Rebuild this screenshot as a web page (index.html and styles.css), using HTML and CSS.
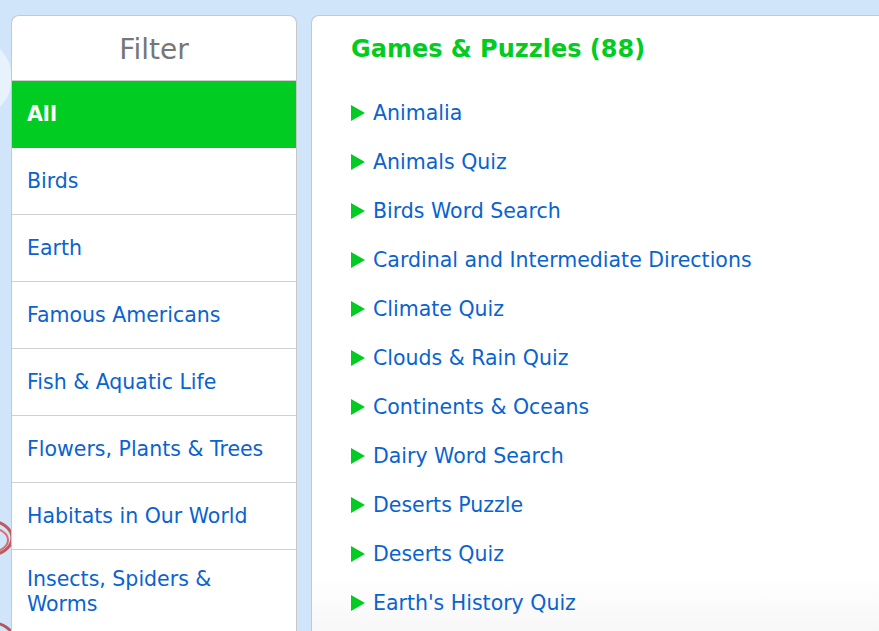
FILE: index.html
```html
<!DOCTYPE html>
<html lang="en">
<head>
<meta charset="utf-8">
<title>Games &amp; Puzzles</title>
<link rel="stylesheet" href="styles.css">
</head>
<body>
<div class="backdrop">
  <svg class="deco" width="60" height="631" viewBox="0 0 60 631" aria-hidden="true">
    <ellipse cx="-22" cy="78" rx="34" ry="38" fill="#e8f2fd"/>
    <ellipse cx="-14" cy="538" rx="26" ry="18" fill="none" stroke="#c0585c" stroke-width="3"/>
    <ellipse cx="-10" cy="540" rx="18" ry="12" fill="none" stroke="#d96a6e" stroke-width="2"/>
    <ellipse cx="-12" cy="640" rx="26" ry="18" fill="none" stroke="#b2585c" stroke-width="3"/>
  </svg>
</div>
<div class="page">
  <aside class="filter">
    <h2 class="filter-title">Filter</h2>
    <ul class="filter-list">
      <li class="filter-item active">All</li>
      <li class="filter-item">Birds</li>
      <li class="filter-item">Earth</li>
      <li class="filter-item">Famous Americans</li>
      <li class="filter-item">Fish &amp; Aquatic Life</li>
      <li class="filter-item">Flowers, Plants &amp; Trees</li>
      <li class="filter-item">Habitats in Our World</li>
      <li class="filter-item wrap">Insects, Spiders &amp; Worms</li>
    </ul>
  </aside>
  <main class="content">
    <h1 class="content-title">Games &amp; Puzzles (88)</h1>
    <ul class="games">
      <li class="game"><span class="tri"></span><a href="#">Animalia</a></li>
      <li class="game"><span class="tri"></span><a href="#">Animals Quiz</a></li>
      <li class="game"><span class="tri"></span><a href="#">Birds Word Search</a></li>
      <li class="game"><span class="tri"></span><a href="#">Cardinal and Intermediate Directions</a></li>
      <li class="game"><span class="tri"></span><a href="#">Climate Quiz</a></li>
      <li class="game"><span class="tri"></span><a href="#">Clouds &amp; Rain Quiz</a></li>
      <li class="game"><span class="tri"></span><a href="#">Continents &amp; Oceans</a></li>
      <li class="game"><span class="tri"></span><a href="#">Dairy Word Search</a></li>
      <li class="game"><span class="tri"></span><a href="#">Deserts Puzzle</a></li>
      <li class="game"><span class="tri"></span><a href="#">Deserts Quiz</a></li>
      <li class="game"><span class="tri"></span><a href="#">Earth's History Quiz</a></li>
    </ul>
  </main>
</div>
</body>
</html>
```
FILE: styles.css
```css
html, body {
  margin: 0;
  padding: 0;
  height: 631px;
  overflow: hidden;
}
body {
  background: #d0e5fa;
  font-family: "Comic Sans MS", "DejaVu Sans", sans-serif;
  position: relative;
}
.backdrop {
  position: absolute;
  left: 0;
  top: 0;
}
.deco {
  display: block;
}
.page {
  position: relative;
  display: flex;
  align-items: flex-start;
  gap: 14px;
  padding: 15px 0 0 11px;
  width: 879px;
  height: 631px;
  box-sizing: border-box;
}
.filter {
  width: 286px;
  box-sizing: border-box;
  flex: none;
  background: #fff;
  border: 1px solid #c8c8c8;
  border-bottom: none;
  border-radius: 8px 8px 0 0;
  height: 616px;
  overflow: hidden;
}
.filter-title {
  margin: 0;
  height: 64px;
  line-height: 68px;
  text-align: center;
  font-size: 28px;
  font-weight: normal;
  color: #777;
  border-bottom: 1px solid #d0d0d0;
}
.filter-list {
  list-style: none;
  margin: 0;
  padding: 0;
}
.filter-item {
  height: 67px;
  box-sizing: border-box;
  display: flex;
  align-items: center;
  padding: 0 20px 0 15px;
  font-size: 20.5px;
  line-height: 25px;
  color: #0a63cf;
  border-bottom: 1px solid #d0d0d0;
}
.filter-item.active {
  background: #00cc22;
  color: #fff;
  font-weight: bold;
  border-bottom: none;
}
.filter-item.wrap {
  height: auto;
  align-items: flex-start;
  padding: 17px 50px 17px 15px;
}
.content {
  flex: 1;
  height: 616px;
  box-sizing: border-box;
  background: linear-gradient(to bottom, #fff 0, #fff 560px, #f7f7f7 616px);
  border: 1px solid #c8c8c8;
  border-right: none;
  border-bottom: none;
  border-radius: 8px 0 0 0;
  padding: 17px 0 0 39px;
}
.content-title {
  margin: 0;
  font-size: 24px;
  line-height: 32px;
  font-weight: bold;
  color: #00cc22;
}
.games {
  list-style: none;
  margin: 23px 0 0;
  padding: 0;
}
.game {
  height: 49px;
  display: flex;
  align-items: center;
  gap: 8px;
}
.tri {
  width: 0;
  height: 0;
  border-left: 14px solid #00cc22;
  border-top: 8px solid transparent;
  border-bottom: 8px solid transparent;
}
.game a {
  color: #0a63cf;
  text-decoration: none;
  font-size: 20.5px;
}
```
